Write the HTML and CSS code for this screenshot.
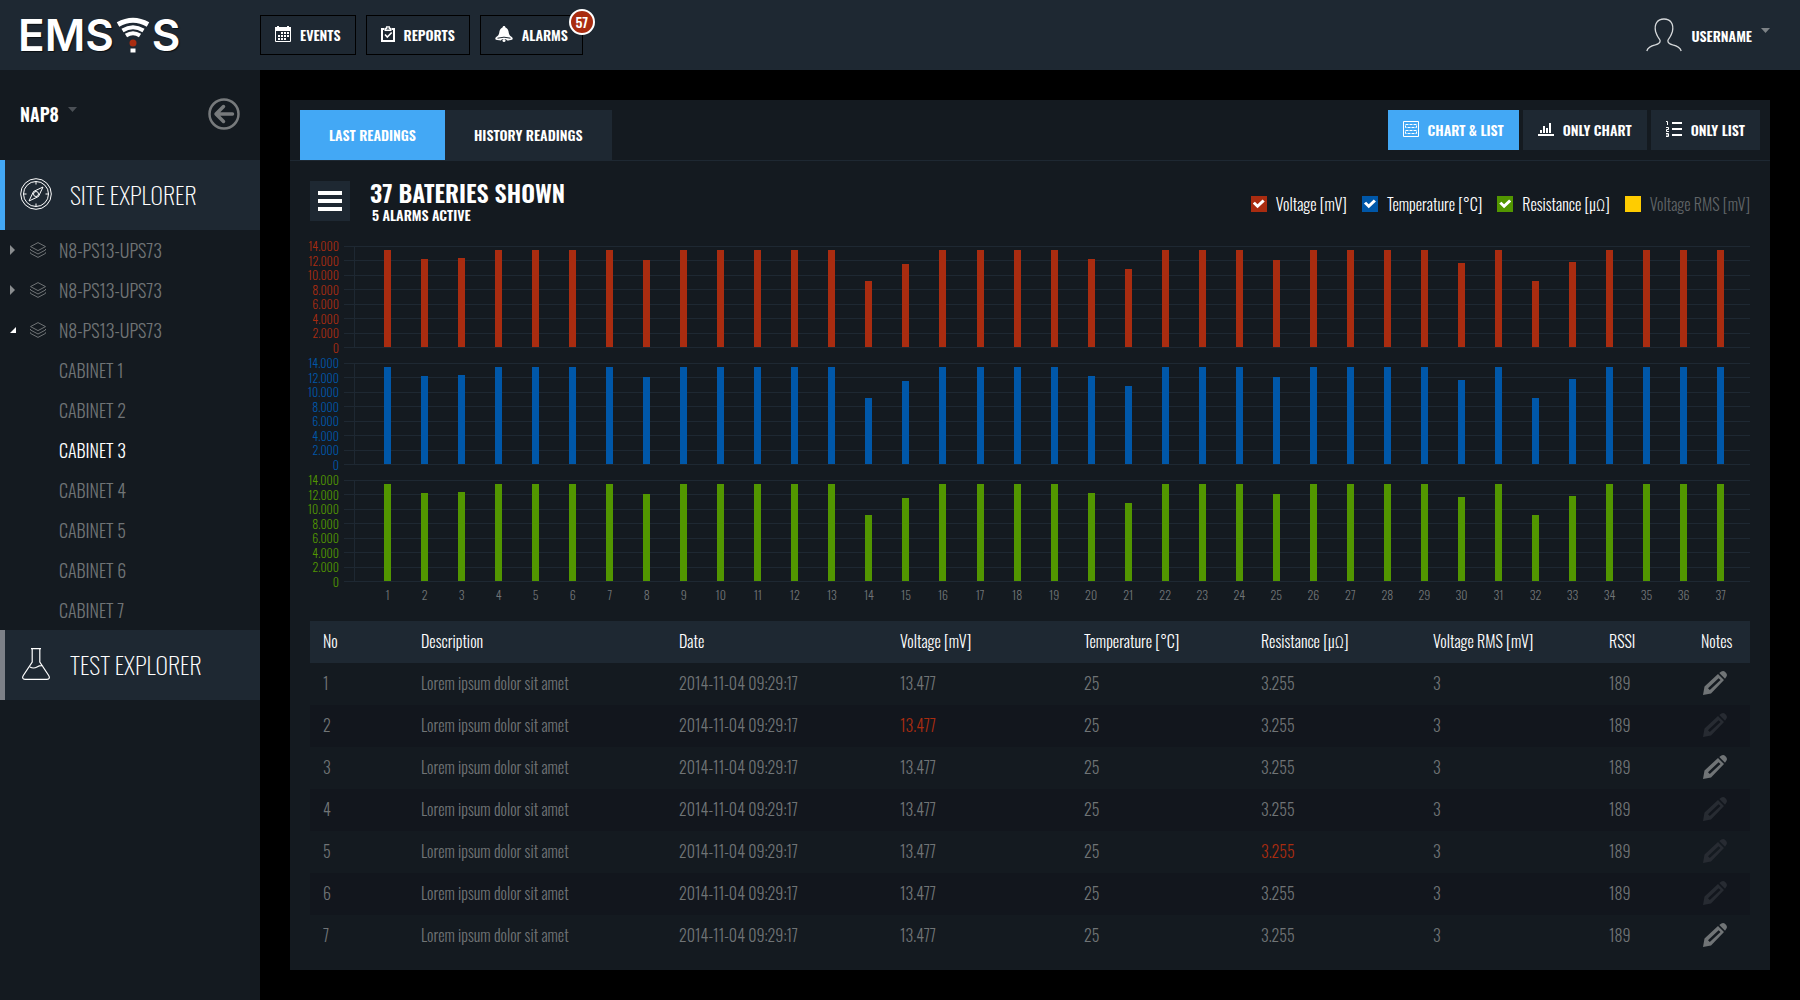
FILE: index.html
```html
<!DOCTYPE html>
<html lang="en">
<head>
    <meta charset="UTF-8">
    <meta name="viewport" content="width=device-width, initial-scale=1.0">
    <title>EMSYS</title>
    <link rel="stylesheet" href="styles.css">
</head>
<body>
    <header class="header">
        <a class="logo" href="#" aria-label="EMSYS">
            <span>EMS</span>
            <svg width="34" height="36" viewBox="0 0 34 36">
                <g fill="none" stroke="#fff">
                    <path d="M2 7.500Q17 -1 32 7.500" stroke-width="5"/>
                    <path d="M6.500 13.500Q17 7 27.500 13.500" stroke-width="4"/>
                    <path d="M10 18.500Q17 14 24 18.500" stroke-width="4"/>
                </g>
                <circle cx="17" cy="26" r="3.500" fill="#a92c10"/>
                <path d="M14.500 31.500h5v4h-5z" fill="#fff"/>
            </svg>
            <span>S</span>
        </a>

        <nav class="header-nav">
            <button class="header-btn">
                <svg width="16" height="16" viewBox="0 0 16 16" fill="#fff">
                    <path d="M0 1h2V0h2v1h8V0h2v1h2v4H0z"/>
                    <path d="M.500 4.500h15v11H.500z" fill="none" stroke="#fff"/>
                    <path d="M6 6h2v2H6zM9 6h2v2H9zM12 6h2v2h-2zM3 9h2v2H3zM6 9h2v2H6zM9 9h2v2H9zM12 9h2v2h-2zM3 12h2v2H3zM6 12h2v2H6zM9 12h2v2H9z"/>
                </svg>
                EVENTS
            </button>
            <button class="header-btn">
                <svg width="14" height="16" viewBox="0 0 14 16" fill="none" stroke="#fff">
                    <path d="M3.500 3H1v12h12V3h-2.500" stroke-width="2"/>
                    <path d="M3.500 4.300h7" stroke-width="1.500"/>
                    <path d="M4.500 4V2.500h1.200V.800h2.600v1.700h1.200V4" stroke-width="1.300"/>
                    <path d="M4 8.500l2.300 2.500 4.400-4.500" stroke-width="1.600"/>
                </svg>
                REPORTS
            </button>
            <button class="header-btn">
                <svg width="18" height="16" viewBox="0 0 18 16" fill="#fff">
                    <path d="M9 0c.900 0 1.400.700 1.500 1.600C13 2.600 13.500 5 13.800 7c.300 2 1.600 3 3 4 1.300 1.300 1.400 2.600-.800 3-1.500.300-3 .400-4 .500-.500-2-5.500-2-6 0-1-.100-2.500-.200-4-.500-2.200-.400-2.100-1.700-.800-3 1.400-1 2.700-2 3-4 .300-2 .800-4.400 3.300-5.400C7.600.700 8.100 0 9 0z"/>
                    <path d="M2.500 12.200q6.500-2 13 0" fill="none" stroke="#1e2832" stroke-width="1"/>
                    <circle cx="9" cy="14.500" r="1.500"/>
                </svg>
                ALARMS
                <span class="badge">57</span>
            </button>
        </nav>

        <button class="user">
            <svg width="36" height="34" viewBox="0 0 36 34" fill="none" stroke="#d5d8da" stroke-width="1.300">
                <path d="M.800 33c1-3.500 4-5.200 8.500-6.200 4-1 5-2.300 4.800-4.300-.200-1.300-1.500-2.300-2.400-4-.900-1.600-1.600-3.500-2.100-5C8 6 11.500 1 18 1s10 5 8.400 12.500c-.500 1.500-1.200 3.400-2.100 5-.900 1.700-2.200 2.700-2.400 4-.200 2 .800 3.300 4.800 4.300 4.500 1 7.500 2.700 8.500 6.200"/>
            </svg>
            USERNAME
            <svg class="caret" width="9" height="5" viewBox="0 0 9 5"><path d="M0 0h9L4.500 5z" fill="#7d8286"/></svg>
        </button>
    </header>

    <div class="layout">
        <aside class="sidebar">
            <div class="site">
                <select class="site-select" aria-label="Site">
                    <option>NAP8</option>
                </select>
                <svg class="caret" width="9" height="5" viewBox="0 0 9 5"><path d="M0 0h9L4.500 5z" fill="#4b5056"/></svg>
                <button class="back" aria-label="Collapse">
                    <svg width="32" height="32" viewBox="0 0 32 32" fill="none" stroke="#777a7c">
                        <circle cx="16" cy="16" r="14.500" stroke-width="2.500"/>
                        <path d="M24.500 16H9M15.500 8.500L8 16l7.500 7.500" stroke-width="3.500" stroke-linecap="round" stroke-linejoin="round"/>
                    </svg>
                </button>
            </div>

            <a class="explorer active" href="#">
                <svg width="32" height="32" viewBox="0 0 32 32" fill="none" stroke="#fff">
                    <circle cx="16" cy="16" r="15.300"/>
                    <circle cx="16" cy="16" r="12.500"/>
                    <path d="M16 3.500v3M16 25.500v3M3.500 16h3M25.500 16h3M23 9l-4.500 9.500L9 23l4.500-9.500z"/>
                    <circle cx="16" cy="16" r="2.500"/>
                </svg>
                SITE EXPLORER
            </a>
            <nav class="tree" id="tree"></nav>
            <a class="explorer" href="#">
                <svg width="32" height="32" viewBox="0 0 32 32" fill="none" stroke="#fff" stroke-width="1.200">
                    <path d="M11 .600h10M12.200 1v13L3.300 27.500C2 29.500 2.500 31.300 5 31.300h22c2.500 0 3-1.800 1.700-3.800L19.800 14V1M10 19q3.500 2 7 0t6-1"/>
                </svg>
                TEST EXPLORER
            </a>
        </aside>

        <main class="content">
            <section class="panel">
                <div class="toolbar">
                    <div class="tabs">
                        <button class="tab active">LAST READINGS</button>
                        <button class="tab">HISTORY READINGS</button>
                    </div>
                    <div class="views">
                        <button class="view active">
                            <svg width="16" height="16" viewBox="0 0 16 16" fill="none" stroke="#fff">
                                <path d="M.500.500h15v15H.500z"/>
                                <path d="M2.500 3.500h11v3h-11zM2.500 9.500h11v3h-11z" stroke-dasharray="3 1"/>
                            </svg>
                            CHART &amp; LIST
                        </button>
                        <button class="view">
                            <svg width="16" height="14" viewBox="0 0 16 14" fill="#fff">
                                <path d="M0 12h16v2H0zM2 8h2v3H2zM5 4h2v7H5zM8 6h2v5H8zM11 1h2v10h-2z"/>
                            </svg>
                            ONLY CHART
                        </button>
                        <button class="view">
                            <svg width="16" height="16" viewBox="0 0 16 16" fill="none" stroke="#fff">
                                <path d="M6 2h10M6 8h10M6 14h10" stroke-width="2"/>
                                <path d="M0 .500h1.500V4M0 6.500h2.500v2H.500v2H3M0 12.500h2.500v3H0M0 14h2.500"/>
                            </svg>
                            ONLY LIST
                        </button>
                    </div>
                </div>

                <div class="summary">
                    <button class="menu-btn" aria-label="Menu">
                        <svg width="24" height="20" viewBox="0 0 24 20" fill="#fff"><path d="M0 0h24v4H0zM0 8h24v4H0zM0 16h24v4H0z"/></svg>
                    </button>
                    <div class="titles">
                        <h1>37 BATERIES SHOWN</h1>
                        <p>5 ALARMS ACTIVE</p>
                    </div>
                    <div class="legend">
                        <label><input type="checkbox" class="red" checked>Voltage [mV]</label>
                        <label><input type="checkbox" class="blue" checked>Temperature [°C]</label>
                        <label><input type="checkbox" class="green" checked>Resistance [µΩ]</label>
                        <label class="off"><input type="checkbox" class="yellow">Voltage RMS [mV]</label>
                    </div>
                </div>

                <div class="charts" id="charts"></div>

                <table class="readings">
                    <colgroup>
                        <col class="col-no">
                        <col class="col-description">
                        <col class="col-date">
                        <col class="col-voltage">
                        <col class="col-temperature">
                        <col class="col-resistance">
                        <col class="col-rms">
                        <col class="col-rssi">
                        <col class="col-notes">
                    </colgroup>
                    <thead>
                        <tr>
                            <th>No</th>
                            <th>Description</th>
                            <th>Date</th>
                            <th>Voltage [mV]</th>
                            <th>Temperature [°C]</th>
                            <th>Resistance [µΩ]</th>
                            <th>Voltage RMS [mV]</th>
                            <th>RSSI</th>
                            <th>Notes</th>
                        </tr>
                    </thead>
                    <tbody id="rows"></tbody>
                </table>
            </section>
        </main>
    </div>

    <script src="script.js"></script>
</body>
</html>
```
FILE: script.js
```js
// Sidebar tree
const layers = `
    <svg width="16" height="16" viewBox="0 0 16 16" fill="none" stroke="#707476">
        <path d="M8 .600l7.500 4L8 8.600.500 4.600zM.500 7v1l7.500 4 7.500-4V7M.500 10.400v1l7.500 4 7.500-4v-1"/>
    </svg>`;
const closed = '<svg width="6" height="10" viewBox="0 0 6 10"><path d="M0 0v10l5-5z" fill="#8a8d8f"/></svg>';
const open = '<svg width="6" height="6" viewBox="0 0 6 6"><path d="M6 0v6H0z" fill="#fff"/></svg>';

let tree = '';
[closed, closed, open].forEach(arrow => {
    tree += `<a class="node" href="#">${arrow}${layers}N8-PS13-UPS73</a>`;
});
for (let i = 1; i <= 7; i++) {
    tree += `<a class="leaf${i === 3 ? ' selected' : ''}" href="#">CABINET ${i}</a>`;
}
document.getElementById('tree').innerHTML = tree;

// Charts
const max = 14000;
const ticks = ['14.000', '12.000', '10.000', '8.000', '6.000', '4.000', '2.000', '0'];
const values = Array(37).fill(13477);
Object.assign(values, {
    1: 12200, 2: 12350, 7: 12000, 13: 9200, 14: 11550, 19: 12200, 20: 10750,
    24: 12000, 29: 11700, 31: 9100, 32: 11850
});

let charts = '';
['red', 'blue', 'green'].forEach(color => {
    const bars = values.map(v => `<span class="slot"><i class="bar" style="height: ${v / max * 100}%"></i></span>`).join('');
    charts += `
        <div class="chart ${color}">
            <div class="ticks">${ticks.map(t => `<span>${t}</span>`).join('')}</div>
            <div class="plot">
                <div class="grid">${'<hr>'.repeat(ticks.length)}</div>
                <div class="bars">${bars}</div>
            </div>
        </div>`;
});
charts += `<div class="numbers">${values.map((v, i) => `<span>${i + 1}</span>`).join('')}</div>`;
document.getElementById('charts').innerHTML = charts;

// Table rows
const pencil = `
    <svg width="24" height="24" viewBox="0 0 24 24">
        <path fill="currentColor" fill-rule="evenodd" d="M0 24l1.500-8.500L15 3l6 6L8 22.500zM5 17.200l1.800 1.800L17.500 9 15.600 7.200z"/>
        <path fill="currentColor" d="M16.300 2L18 .700c1.500-1 3-.900 4.200.200 1.500 1.200 2.300 3 1.300 4.600L22 7.700z"/>
    </svg>`;
const withNote = [1, 3, 7];

let rows = '';
for (let i = 1; i <= 7; i++) {
    rows += `
        <tr>
            <td>${i}</td>
            <td>Lorem ipsum dolor sit amet</td>
            <td>2014-11-04 09:29:17</td>
            <td${i === 2 ? ' class="alarm"' : ''}>13.477</td>
            <td>25</td>
            <td${i === 5 ? ' class="alarm"' : ''}>3.255</td>
            <td>3</td>
            <td>189</td>
            <td><button class="note${withNote.includes(i) ? '' : ' empty'}" aria-label="Note ${i}">${pencil}</button></td>
        </tr>`;
}
document.getElementById('rows').innerHTML = rows;
```
FILE: styles.css
```css
* {
    margin: 0;
    padding: 0;
    box-sizing: border-box;
}

body {
    min-height: 100vh;
    display: flex;
    flex-direction: column;
    background-color: #000;
    color: #fff;
    font-family: "Oswald", "Roboto Condensed", sans-serif;
    font-size: 16px;
    font-weight: 300;
}

a {
    color: inherit;
    text-decoration: none;
}

button,
select {
    font: inherit;
    color: inherit;
    background: none;
    border: none;
    cursor: pointer;
}

svg {
    display: block;
    flex-shrink: 0;
}

/* Header */
.header {
    display: flex;
    align-items: center;
    height: 70px;
    padding-right: 30px;
    background-color: #1e2832;
}

.logo {
    display: flex;
    align-items: center;
    gap: 2px;
    width: 260px;
    padding-left: 18px;
    font-family: "Inter", sans-serif;
    font-size: 44px;
    font-weight: 600;
    line-height: 70px;
    text-shadow: 1px 1px 1px #0b0f13;
}

.header-nav {
    display: flex;
    gap: 10px;
    flex: 1;
}

.header-btn {
    position: relative;
    display: flex;
    align-items: center;
    gap: 9px;
    height: 40px;
    padding: 0 14px 2px;
    border: 1px solid #000;
    font-size: 14px;
    font-weight: 600;
}

.badge {
    position: absolute;
    top: -7px;
    right: -13px;
    width: 26px;
    height: 26px;
    border: 2px solid #fff;
    border-radius: 50%;
    background-color: #a92c10;
    font-weight: 500;
    line-height: 22px;
    text-align: center;
}

.user {
    display: flex;
    align-items: center;
    gap: 9px;
    font-size: 14px;
    font-weight: 600;
}

.caret {
    margin-bottom: 10px;
}

/* Sidebar */
.layout {
    display: flex;
    flex: 1;
}

.sidebar {
    width: 260px;
    flex-shrink: 0;
    background-color: #141a20;
}

.site {
    display: flex;
    align-items: center;
    gap: 9px;
    height: 90px;
    padding: 0 20px 2px;
}

.site-select {
    appearance: none;
    font-size: 18px;
    font-weight: 600;
}

.back {
    margin-left: auto;
}

.explorer {
    display: flex;
    align-items: center;
    gap: 18px;
    height: 70px;
    padding: 0 0 2px 15px;
    border-left: 5px solid #7d8188;
    background-color: #1e2832;
    font-size: 24px;
    font-weight: 200;
}

.explorer.active {
    border-color: #43a8f5;
}

.tree {
    color: #707476;
    font-size: 18px;
}

.node,
.leaf {
    display: flex;
    align-items: center;
    height: 40px;
    padding-left: 59px;
}

.node {
    gap: 13px;
    padding-left: 10px;
}

.node svg:first-child {
    margin-right: 1px;
}

.leaf.selected {
    color: #fff;
}

/* Panel */
.content {
    flex: 1;
    padding: 30px;
}

.panel {
    padding-bottom: 13px;
    background-color: #141a20;
}

.toolbar {
    display: flex;
    justify-content: space-between;
    padding: 10px 10px 0;
    border-bottom: 1px solid #1e2832;
    font-size: 14px;
    font-weight: 600;
}

.tabs {
    display: flex;
}

.tab {
    height: 50px;
    padding: 0 29px 2px;
    background-color: #1e2832;
}

.views {
    display: flex;
    gap: 4px;
}

.view {
    display: flex;
    align-items: center;
    gap: 9px;
    height: 40px;
    padding: 0 15px 2px;
    background-color: #1e2832;
}

.tab.active,
.view.active {
    background-color: #43a8f5;
}

.summary {
    display: flex;
    align-items: center;
    gap: 20px;
    padding: 17px 20px 22px;
}

.menu-btn {
    width: 40px;
    height: 40px;
    padding: 0 8px;
    background-color: #1e2832;
}

.titles {
    flex: 1;
}

.titles h1 {
    font-size: 24px;
    font-weight: 600;
    line-height: 28px;
}

.titles p {
    padding-left: 2px;
    font-size: 14px;
    font-weight: 600;
    line-height: 18px;
}

.legend {
    display: flex;
    gap: 15px;
    padding-top: 6px;
}

.legend label {
    display: flex;
    align-items: center;
    gap: 9px;
}

.legend .off {
    color: #606467;
}

.legend input {
    appearance: none;
    display: grid;
    place-items: center;
    width: 16px;
    height: 16px;
}

.legend input:checked::before {
    content: "";
    width: 12px;
    height: 10px;
    background-color: #fff;
    clip-path: polygon(0 45%, 18% 28%, 40% 52%, 82% 5%, 100% 24%, 40% 92%);
}

.legend .red {
    background-color: #a92c10;
}

.legend .blue {
    background-color: #0057a8;
}

.legend .green {
    background-color: #529600;
}

.legend .yellow {
    background-color: #ffcc00;
}

/* Charts */
.charts {
    padding: 0 20px;
    font-size: 12px;
}

.chart {
    display: flex;
    gap: 5px;
    height: 102px;
    margin-bottom: 15px;
}

.chart.red {
    color: #a92c10;
}

.chart.blue {
    color: #0057a8;
}

.chart.green {
    color: #529600;
    margin-bottom: 3px;
}

.ticks {
    display: flex;
    flex-direction: column;
    justify-content: space-between;
    width: 29px;
    margin: -7px 0;
    line-height: 14px;
    text-align: right;
}

.ticks span {
    display: flex;
    justify-content: flex-end;
}

.plot {
    display: grid;
    flex: 1;
}

.grid,
.bars {
    grid-area: 1 / 1;
}

.grid {
    display: flex;
    flex-direction: column;
    justify-content: space-between;
}

.grid hr {
    border: none;
    border-top: 1px solid #1e2832;
}

.bars {
    display: flex;
    margin-left: 10px;
    padding: 0 11px 1px 14px;
    border-left: 1px solid #1e2832;
}

.slot {
    display: flex;
    flex: 1;
    align-items: flex-end;
    justify-content: center;
}

.bar {
    width: 7px;
    background-color: currentColor;
}

.numbers {
    display: flex;
    padding: 0 11px 0 59px;
    color: #707476;
    line-height: 20px;
}

.numbers span {
    flex: 1;
    text-align: center;
}

/* Table */
.readings {
    width: calc(100% - 40px);
    margin: 16px 20px 0;
    border-collapse: collapse;
    table-layout: fixed;
}

.readings th,
.readings td {
    height: 42px;
    padding: 0 0 2px 13px;
    font-weight: 300;
    text-align: left;
}

.readings th {
    background-color: #1e2832;
}

.readings td {
    color: #707476;
}

.readings tbody tr:nth-child(even) {
    background-color: #12161d;
}

.readings .alarm {
    color: #a92c10;
}

.col-no { width: 98px; }
.col-description { width: 258px; }
.col-date { width: 221px; }
.col-voltage { width: 184px; }
.col-temperature { width: 177px; }
.col-resistance { width: 172px; }
.col-rms { width: 176px; }
.col-rssi { width: 92px; }
.col-notes { width: 62px; }

.note {
    display: block;
    margin-left: 2px;
    color: #707476;
}

.note.empty {
    color: #272b32;
}
```
